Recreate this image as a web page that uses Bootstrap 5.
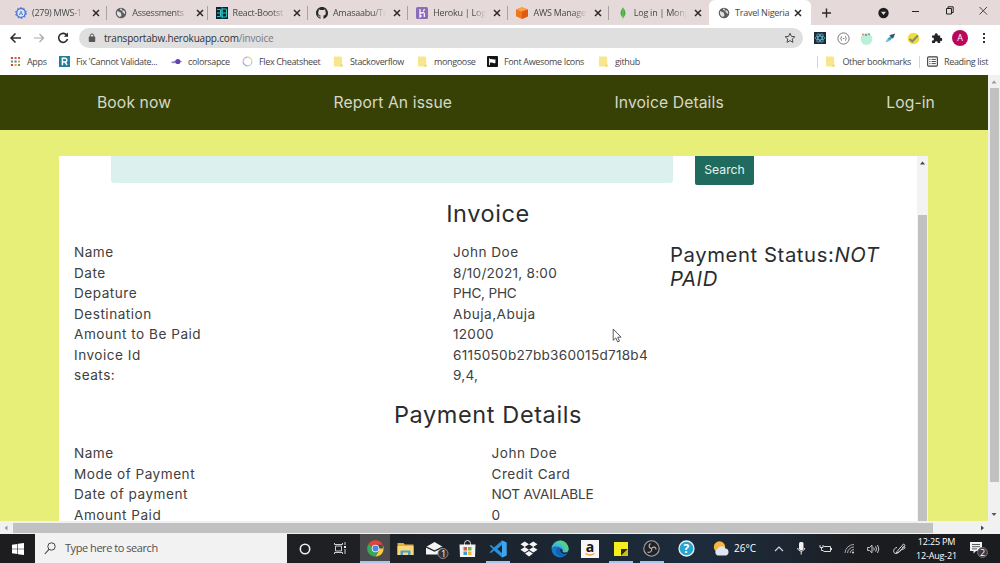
<!DOCTYPE html>
<html lang="en">
<head>
  <meta charset="UTF-8">
  <meta name="viewport" content="width=device-width, initial-scale=1.0">
  <title>Travel Nigeria</title>
  <link href="https://cdn.jsdelivr.net/npm/bootstrap@5.3.0/dist/css/bootstrap.min.css" rel="stylesheet">
  <style>
    body {
      width: 1000px;
      height: 563px;
      overflow: hidden;
      font-family: "Open Sans", "Liberation Sans", sans-serif;
      font-size: 9px;
      line-height: 1.3;
      color: #45474a;
    }
    svg { display: block; flex: none; }

    /* browser tabs */
    .tab-strip { height: 25px; background: #e5dad9; padding-left: 7px; }
    .tab-item {
      width: 100.3px;
      padding: 0 7px 0 8px;
      gap: 5px;
      position: relative;
    }
    .tab-item::after {
      content: "";
      width: 1px;
      height: 14px;
      background: #aaa1a1;
      position: absolute;
      right: 0;
      top: 6px;
    }
    .tab-item.current { background: #fff; border-radius: 6px 6px 0 0; padding-left: 9px; width: 102px; }
    .tab-item.current::after, .tab-item.before-current::after { display: none; }
    .tab-title {
      flex: 1;
      white-space: nowrap;
      letter-spacing: -.25px;
      -webkit-mask-image: linear-gradient(to right, #000 72%, transparent 96%);
      mask-image: linear-gradient(to right, #000 72%, transparent 96%);
    }
    .current .tab-title { -webkit-mask-image: none; mask-image: none; }

    /* address row */
    .tool-row { height: 26px; background: #fff; }
    .nav-icons { width: 79px; padding-left: 9px; gap: 12px; }
    .address { width: 724px; height: 20px; border-radius: 10px; background: #dfdfe0; padding: 0 7px 0 9px; font-size: 10px; letter-spacing: -.19px; color: #303134; }
    .address .path { color: #77797c; }
    .ext { display: grid; grid-template-columns: 23px 24px 23px 23px 24px 23px 24px 24px; padding-left: 5px; }
    .avatar { width: 16px; height: 16px; background: #b8085c; color: #fff; font-size: 9px; line-height: 16px; }

    /* bookmarks */
    .bookmark-row { height: 24px; background: #fff; padding-bottom: 3px; }
    .bookmarks { display: grid; grid-template-columns: 49px 112px 71px 91px 84px 70px 111px 60px; padding-left: 10px; }
    .bm { gap: 6px; white-space: nowrap; letter-spacing: -.35px; }
    .bm svg { width: 11px; height: 11px; }
    .bm-right { border-left: 1px solid #d5d5d5; padding-left: 7px; height: 12px; }

    /* page */
    .site { height: 446px; }
    .viewport { width: 988px; background: #e7ef79; font-family: "Inter", "Liberation Sans", sans-serif; }
    .site-nav { height: 55px; background: #374106; padding: 2px 53px 0 97px; font-size: 15.7px; color: #d6d8c6; letter-spacing: .1px; }
    .invoice-card { width: 869px; height: 365px; margin: 26px 0 0 59px; background: #fff; overflow: hidden; color: #404040; }
    .invoice-body { width: 858px; font-size: 13.6px; line-height: 20.5px; padding-left: 15px; }
    .search-field { width: 562px; height: 27px; margin-left: 37px; background: #dcf1ee; border-radius: 0 0 3px 3px; }
    .search-btn { width: 59px; height: 28.5px; margin-left: 22px; background: #1f6b5e; color: #e9f4f2; font-size: 12.2px; border-radius: 0 0 2px 2px; line-height: 27px; }
    .section-title { font-size: 23.5px; line-height: 29px; margin: 14px 0 0; color: #2b2c2e; margin-left: -15px; letter-spacing: .6px; }
    .section-rows { margin-top: 14.5px; letter-spacing: .5px; }
    .num { letter-spacing: .25px; }
    .caps { letter-spacing: -.2px; }
    .col-labels { width: 379px; }
    .col-values { width: 217px; }
    .wide .col-labels { width: 417.5px; }
    .status { width: 230px; font-size: 20.3px; line-height: 24px; color: #2b2c2e; letter-spacing: .58px; margin-top: 1px; }

    /* scrollbars */
    .scroll-col { width: 12px; background: #f1f1f1; }
    .card-scroll { width: 11px; background: #f3f3f3; }
    .thumb { background: #c1c1c1; }
    .scroll-col .thumb { height: 394px; width: 9px; }
    .card-scroll .thumb { width: 9px; height: 306px; }
    .h-scroll { height: 13px; background: #f1f1f1; }
    .h-scroll .thumb { width: 920px; height: 10px; }

    /* taskbar */
    .taskbar {
      height: 29px;
      background: linear-gradient(to right, #1d1d20 0, #1f2024 36%, #1b2530 52%, #1d2b3b 70%, #1d2733 78%, #1b1c1f 86%);
      display: grid;
      grid-template-columns: 35px 252px 35px 38px 30px 31px 31px 30px 31px 31px 31px 30px 31px 31px 38px 63px 22px 22px 26px 23px 24px 28px 47px 35px;
      color: #fff;
    }
    .taskbar > div { display: flex; align-items: center; justify-content: center; height: 29px; }
    .taskbar .search-box { background: #f2f2f2; color: #505050; justify-content: flex-start; padding-left: 9px; gap: 9px; font-size: 11px; letter-spacing: -.45px; }
    .taskbar .active-app { background-color: #4b4b4e; }
    .taskbar .running { background-image: linear-gradient(#a9c4ea, #a9c4ea); background-size: 24px 2px; background-position: center bottom; background-repeat: no-repeat; }
    .taskbar .active-app.running { background-size: 30px 2px; }
    .temp { font-size: 10px; gap: 4px; }
    .clock { font-size: 9px; line-height: 13.5px; letter-spacing: -.15px; white-space: nowrap; text-align: center; }

    .pointer { position: absolute; left: 612px; top: 328px; }
  </style>
</head>
<body>

  <!-- shared icons -->
  <svg width="0" height="0" class="position-absolute">
    <symbol id="close" viewBox="0 0 8 8"><path d="M1 1l6 6M7 1l-6 6" stroke="#2c2829" stroke-width="1.5"/></symbol>
    <symbol id="globe" viewBox="0 0 12 12"><circle cx="6" cy="6" r="5.3" fill="#5c5e61"/><path d="M2 4.2c1.6-.2 2.4 1 3.4 1.4 1.2.5.2 1.4 1 2.2.5.6-.8 2-1.5 2.2C2.700 9.300 1.400 7 2 4.200zM6.200 1.600c1 .5.400 1.500 1.300 1.800.8.300 1.400-.2 1.900.6.700 1.100 1 2.200.5 3.300-.6-.3-.5-1.300-1.400-1.500-1-.2-1.200-1-1-1.700C6.600 3.400 5 3.500 5 2.600c0-.5.600-.9 1.200-1z" fill="#e6e1e1"/></symbol>
    <symbol id="folder" viewBox="0 0 12 12"><path d="M1 .5h7.500l1.500 1v10H1z" fill="#f7e68c"/><path d="M8.500 9.500h2v2h-2z" fill="#e9cf62"/></symbol>
  </svg>

  <!-- tabs -->
  <div class="tab-strip d-flex">
    <div class="tab-item d-flex align-items-center">
      <svg width="12" height="12" viewBox="0 0 12 12"><circle cx="6" cy="6" r="4.300" fill="#dfe6f6" stroke="#3c6fd6" stroke-width="1.300"/><circle cx="6" cy="6" r="5.400" fill="none" stroke="#3c6fd6" stroke-width="1" stroke-dasharray="1.700 1.700"/><path d="M4.300 8L6 4l1.700 4M4.800 6.800h2.400" stroke="#4b7bd8" stroke-width=".8" fill="none"/></svg>
      <span class="tab-title">(279) MWS-1</span>
      <svg width="8" height="8"><use href="#close"/></svg>
    </div>
    <div class="tab-item d-flex align-items-center">
      <svg width="12" height="12"><use href="#globe"/></svg>
      <span class="tab-title">Assessments |</span>
      <svg width="8" height="8"><use href="#close"/></svg>
    </div>
    <div class="tab-item d-flex align-items-center">
      <svg width="12" height="12" viewBox="0 0 12 12"><path d="M0 0h12v12H0z" fill="#0b2529"/><path d="M1 2.500h3.500v7H1M1 6h3M6 2h4.500v8H6zM6 6h4.500M6 .5v11" stroke="#2ec4c8" stroke-width="1" fill="none"/></svg>
      <span class="tab-title">React-Bootst</span>
      <svg width="8" height="8"><use href="#close"/></svg>
    </div>
    <div class="tab-item d-flex align-items-center">
      <svg width="12" height="12" viewBox="0 0 16 16"><path fill="#24292e" d="M8 0C3.580 0 0 3.580 0 8c0 3.540 2.290 6.530 5.470 7.590.4.070.55-.17.55-.38 0-.19-.01-.82-.01-1.490-2.010.37-2.530-.49-2.690-.94-.09-.23-.48-.94-.82-1.130-.28-.15-.68-.52-.01-.53.63-.01 1.080.58 1.230.82.72 1.210 1.870.87 2.330.66.070-.52.28-.87.51-1.070-1.780-.2-3.640-.89-3.640-3.950 0-.87.31-1.590.82-2.150-.08-.2-.36-1.020.08-2.120 0 0 .67-.21 2.200.82.64-.18 1.320-.27 2-.27s1.360.09 2 .27c1.530-1.040 2.200-.82 2.200-.82.44 1.100.16 1.920.08 2.120.51.56.82 1.270.82 2.150 0 3.070-1.870 3.750-3.650 3.950.29.25.54.73.54 1.480 0 1.070-.01 1.930-.01 2.200 0 .21.15.46.55.38A8.010 8.010 0 0016 8c0-4.420-3.580-8-8-8z"/></svg>
      <span class="tab-title">Amasaabu/Tr</span>
      <svg width="8" height="8"><use href="#close"/></svg>
    </div>
    <div class="tab-item d-flex align-items-center">
      <svg width="12" height="12" viewBox="0 0 12 12"><rect width="12" height="12" rx="1.500" fill="#8c6cb8"/><path d="M4 2v4.500c3-1.300 4.300-.9 4.300 0V10M4 8v2l1.200-1zM8.300 2c0 1-.5 1.700-1.200 2.200" stroke="#fff" stroke-width="1.200" fill="none"/></svg>
      <span class="tab-title">Heroku | Logi</span>
      <svg width="8" height="8"><use href="#close"/></svg>
    </div>
    <div class="tab-item d-flex align-items-center">
      <svg width="12" height="12" viewBox="0 0 12 12"><path d="M6 .3l6 2.200v6.800L6 11.900 0 9.300V2.500z" fill="#f0751b"/><path d="M6 .3l6 2.200-6 2-6-2z" fill="#fba340"/><path d="M6 4.500l6-2v6.800l-6 2.600z" fill="#e25a12"/></svg>
      <span class="tab-title">AWS Manage</span>
      <svg width="8" height="8"><use href="#close"/></svg>
    </div>
    <div class="tab-item before-current d-flex align-items-center">
      <svg width="12" height="12" viewBox="0 0 12 12"><path d="M6 .5c3.500 4 3 7.500 0 10.500C3 8 2.500 4.500 6 .5z" fill="#3fae3f"/><path d="M6 .5V12" stroke="#8fd07a" stroke-width=".7"/></svg>
      <span class="tab-title">Log in | Mong</span>
      <svg width="8" height="8"><use href="#close"/></svg>
    </div>
    <div class="tab-item current d-flex align-items-center">
      <svg width="12" height="12"><use href="#globe"/></svg>
      <span class="tab-title">Travel Nigeria</span>
      <svg width="8" height="8" class="me-1"><use href="#close"/></svg>
    </div>
    <div class="flex-fill d-flex align-items-center justify-content-between ps-2 pe-2">
      <svg width="14" height="12" viewBox="0 0 14 12"><path d="M7.500 1.500v9M3 6h9" stroke="#2c2829" stroke-width="1.400"/></svg>
      <svg width="124" height="20" viewBox="0 0 124 20"><circle cx="15.500" cy="10" r="5.200" fill="#1f1f21"/><path d="M13 8.800h5L15.500 12z" fill="#e5dad9"/><path d="M44 8.500h7" stroke="#222"/><path d="M78.500 5.500h5v5.500h-5zM80 5.500V3.800h5.200v5.700h-1.700" stroke="#222" fill="none"/><path d="M111.500 4l7.500 7.500M119 4l-7.500 7.500" stroke="#333" stroke-width=".9"/></svg>
    </div>
  </div>

  <!-- address bar -->
  <div class="tool-row d-flex align-items-center">
    <div class="nav-icons d-flex align-items-center">
      <svg width="12" height="12" viewBox="0 0 12 12"><path d="M12 6H2M6.500 1.500L2 6l4.500 4.500" stroke="#2b2c2e" stroke-width="1.500" fill="none"/></svg>
      <svg width="12" height="12" viewBox="0 0 12 12"><path d="M1 6h9.500M6.500 2l4 4-4 4" stroke="#a7a8aa" stroke-width="1.200" fill="none"/></svg>
      <svg width="12" height="12" viewBox="0 0 12 12"><path d="M10 3.500A4.500 4.500 0 1 0 10.500 7" stroke="#2b2c2e" stroke-width="1.600" fill="none"/><path d="M11 .5v4.300H6.800z" fill="#2b2c2e"/></svg>
    </div>
    <div class="address d-flex align-items-center">
      <svg width="8" height="10" viewBox="0 0 8 10" class="me-2"><rect x=".8" y="3.500" width="6.400" height="5.500" rx=".7" fill="#55575a"/><path d="M2.300 4V2.600a1.700 1.700 0 0 1 3.400 0V4" stroke="#55575a" fill="none"/></svg>
      <span class="url">transportabw.herokuapp.com<span class="path">/invoice</span></span>
      <svg width="12" height="12" viewBox="0 0 12 12" class="ms-auto"><path d="M6 1.200l1.400 3.200 3.500.3-2.700 2.300.8 3.400L6 8.600 3 10.400l.8-3.400L1.100 4.700l3.500-.3z" stroke="#4d4f52" fill="none"/></svg>
    </div>
    <div class="ext flex-fill align-items-center">
      <svg width="12" height="12" viewBox="0 0 12 12" class="mx-auto"><path d="M0 0h12v12H0z" fill="#202a35"/><g fill="none" stroke="#5cb8d4" stroke-width=".8"><ellipse cx="6" cy="6" rx="4.800" ry="1.900"/><ellipse cx="6" cy="6" rx="4.800" ry="1.900" transform="rotate(60 6 6)"/><ellipse cx="6" cy="6" rx="4.800" ry="1.900" transform="rotate(120 6 6)"/></g></svg>
      <svg width="13" height="13" viewBox="0 0 13 13" class="mx-auto"><circle cx="6.500" cy="6.500" r="5.600" stroke="#66686b" fill="#fff" stroke-width=".9"/><path d="M4.900 4.300c-1 0-.2 1.800-1.200 2.200 1 .4.200 2.200 1.200 2.200M8.100 4.300c1 0 .2 1.800 1.200 2.200-1 .4-.2 2.200-1.200 2.200M5.800 6.500h1.500" stroke="#55575a" fill="none" stroke-width=".8"/></svg>
      <svg width="13" height="13" viewBox="0 0 13 13" class="mx-auto"><circle cx="6.500" cy="7" r="5.900" fill="#b9f0da"/><circle cx="3" cy="2.500" r="1.100" fill="#d88f7a"/><circle cx="6" cy="3" r=".9" fill="#c65a50"/><circle cx="9" cy="2.300" r="1" fill="#58a978"/></svg>
      <svg width="12" height="12" viewBox="0 0 12 12" class="mx-auto"><path d="M1.500 10.500L3 7l2.500 2z" fill="#6cc0dc"/><path d="M3.200 7L7 3.500l2 2L5.500 9z" fill="#4ba5c8"/><path d="M5.300 3.200L9 6.800 11.200 1.500z" fill="#35566a"/></svg>
      <svg width="13" height="13" viewBox="0 0 13 13" class="mx-auto"><circle cx="6.500" cy="6.500" r="5.800" fill="#f2dc3c"/><path d="M2.500 7l2.800 2.300L11 3.500" stroke="#7d8a76" stroke-width="2" fill="none"/></svg>
      <svg width="12" height="12" viewBox="0 0 12 12" class="mx-auto"><path d="M1 3.500h2.700a1.600 1.600 0 1 1 3 0H9.200V6a1.500 1.500 0 1 1 0 2.800V11H6.700a1.400 1.400 0 1 0-2.700 0H1V8.400a1.400 1.400 0 1 0 0-2.600z" fill="#222427"/></svg>
      <div class="avatar rounded-circle text-center mx-auto">A</div>
      <svg width="4" height="12" viewBox="0 0 4 12" class="mx-auto"><path d="M1 1h2v2H1zM1 5h2v2H1zM1 9h2v2H1z" fill="#333"/></svg>
    </div>
  </div>

  <!-- bookmarks -->
  <div class="bookmark-row d-flex align-items-center">
    <div class="bookmarks">
      <div class="bm d-flex align-items-center"><svg width="12" height="12" viewBox="0 0 12 12"><path d="M1 1h2.300v2.300H1zM1 8.700h2.300V11H1z" fill="#c9493c"/><path d="M4.900 1h2.300v2.300H4.900zM8.700 1H11v2.300H8.700z" fill="#d65b4c"/><path d="M1 4.900h2.300v2.300H1zM8.700 8.700H11V11H8.700z" fill="#5e9e50"/><path d="M4.900 4.900h2.300v2.300H4.900z" fill="#4a7fd8"/><path d="M8.700 4.900H11v2.300H8.700zM4.900 8.700h2.300V11H4.900z" fill="#dda93c"/></svg>Apps</div>
      <div class="bm d-flex align-items-center"><svg width="12" height="12" viewBox="0 0 12 12"><path d="M0 0h12v12H0z" fill="#20809c"/><path d="M3.700 10V2.500H6.500a2 2 0 0 1 0 4H4M6.500 6.500L8.800 10" stroke="#fff" stroke-width="1.600" fill="none"/></svg>Fix 'Cannot Validate...</div>
      <div class="bm d-flex align-items-center"><svg width="12" height="12" viewBox="0 0 12 12"><ellipse cx="6" cy="6.500" rx="6" ry="1.200" fill="#9d86d2" transform="rotate(-6 6 6)"/><circle cx="7.500" cy="6" r="2.800" fill="#6246ad"/></svg>colorsapce</div>
      <div class="bm d-flex align-items-center"><svg width="12" height="12" viewBox="0 0 12 12" fill="none" stroke-width="1.200"><path d="M6 1.200A4.800 4.800 0 0 1 10.800 6" stroke="#d9d77c"/><path d="M10.800 6A4.800 4.800 0 0 1 6 10.800" stroke="#94d6c4"/><path d="M6 10.800A4.800 4.800 0 0 1 1.200 6" stroke="#9d9be2"/><path d="M1.200 6A4.800 4.800 0 0 1 6 1.200" stroke="#dfa3c6"/></svg>Flex Cheatsheet</div>
      <div class="bm d-flex align-items-center"><svg width="12" height="12"><use href="#folder"/></svg>Stackoverflow</div>
      <div class="bm d-flex align-items-center"><svg width="12" height="12"><use href="#folder"/></svg>mongoose</div>
      <div class="bm d-flex align-items-center"><svg width="12" height="12" viewBox="0 0 12 12"><rect width="12" height="12" rx="1" fill="#141416"/><path d="M2.700 2.500V10" stroke="#fff"/><path d="M3.200 3.500c2.200-1 3.500 1 6 0v4c-2.500 1-3.800-1-6 0z" fill="#fff"/></svg>Font Awesome Icons</div>
      <div class="bm d-flex align-items-center"><svg width="12" height="12"><use href="#folder"/></svg>github</div>
    </div>
    <div class="d-flex ms-auto pe-2 me-1">
      <div class="bm bm-right d-flex align-items-center"><svg width="12" height="12"><use href="#folder"/></svg>Other bookmarks</div>
      <div class="bm bm-right ms-2 d-flex align-items-center"><svg width="12" height="12" viewBox="0 0 12 12"><rect x=".7" y="1" width="10.600" height="10" rx="1" stroke="#3c3e41" stroke-width="1.200" fill="none"/><path d="M2.500 3.700h1.300M5 3.700h4.700M2.500 6h1.300M5 6h4.700M2.500 8.300h1.300M5 8.300h4.700" stroke="#3c3e41"/></svg>Reading list</div>
    </div>
  </div>

  <!-- page -->
  <div class="site d-flex">
    <div class="viewport">
      <nav class="site-nav d-flex justify-content-between align-items-center">
        <span>Book now</span>
        <span>Report An issue</span>
        <span>Invoice Details</span>
        <span>Log-in</span>
      </nav>
      <div class="invoice-card d-flex">
        <div class="invoice-body">
          <div class="d-flex">
            <div class="search-field"></div>
            <div class="search-btn text-center">Search</div>
          </div>
          <h3 class="section-title text-center fw-normal">Invoice</h3>
          <div class="section-rows d-flex">
            <div class="col-labels">
              <div>Name</div>
              <div>Date</div>
              <div>Depature</div>
              <div>Destination</div>
              <div>Amount to Be Paid</div>
              <div>Invoice Id</div>
              <div>seats:</div>
            </div>
            <div class="col-values">
              <div>John Doe</div>
              <div class="num">8/10/2021, 8:00</div>
              <div class="caps">PHC, PHC</div>
              <div>Abuja,Abuja</div>
              <div class="num">12000</div>
              <div class="num">6115050b27bb360015d718b4</div>
              <div class="num">9,4,</div>
            </div>
            <div class="status">Payment Status:<i>NOT</i> <i>PAID</i></div>
          </div>
          <h3 class="section-title text-center fw-normal">Payment Details</h3>
          <div class="section-rows wide d-flex">
            <div class="col-labels">
              <div>Name</div>
              <div>Mode of Payment</div>
              <div>Date of payment</div>
              <div>Amount Paid</div>
            </div>
            <div>
              <div>John Doe</div>
              <div>Credit Card</div>
              <div class="caps">NOT AVAILABLE</div>
              <div>0</div>
            </div>
          </div>
        </div>
        <div class="card-scroll d-flex flex-column align-items-center">
          <svg width="11" height="59" viewBox="0 0 11 59"><path d="M3 8.500h5L5.500 5.500z" fill="#444"/></svg>
          <div class="thumb"></div>
        </div>
      </div>
    </div>
    <div class="scroll-col d-flex flex-column align-items-center">
      <svg width="12" height="13" viewBox="0 0 12 13"><path d="M3.500 8.500h5L6 5.500z" fill="#999"/></svg>
      <div class="thumb"></div>
      <svg width="12" height="13" viewBox="0 0 12 13" class="mt-auto"><path d="M3.500 5h5L6 8z" fill="#555"/></svg>
    </div>
  </div>
  <div class="h-scroll d-flex align-items-center">
    <svg width="13" height="12" viewBox="0 0 13 12"><path d="M7.500 3.500v5L4.500 6z" fill="#999"/></svg>
    <div class="thumb"></div>
    <svg width="55" height="12" viewBox="0 0 55 12"><path d="M48 3.500v5L51 6z" fill="#444"/></svg>
  </div>

  <!-- taskbar -->
  <div class="taskbar">
    <div><svg width="12" height="12" viewBox="0 0 12 12"><path d="M0 1.700l5.400-.8v4.800H0zM6 .8L12 0v5.700H6zM0 6.300h5.400v4.800L0 10.300zM6 6.300h6V12l-6-.8z" fill="#fff"/></svg></div>
    <div class="search-box">
      <svg width="12" height="13" viewBox="0 0 12 13"><circle cx="7.500" cy="4.500" r="3.700" stroke="#444" fill="none"/><path d="M5 7.300L.8 12" stroke="#444" stroke-width="1.100"/></svg>
      <span class="hint">Type here to search</span>
    </div>
    <div><svg width="12" height="12" viewBox="0 0 12 12"><circle cx="6" cy="6" r="4.700" stroke="#eee" stroke-width="1.600" fill="none"/></svg></div>
    <div><svg width="14" height="13" viewBox="0 0 14 13"><path d="M1.500 4h6v5h-6zM.5 1v1.500h8V1M.5 12v-1.500h8V12M11 0v3M11 7v5" stroke="#cfcfd2" fill="none"/><path d="M10 4h2v2h-2z" fill="#eee"/></svg></div>
    <div class="active-app running"><svg width="17" height="17" viewBox="0 0 18 18"><path d="M9 9L1.400 4.600A8.700 8.700 0 0 1 16.700 5H9z" fill="#e0453a"/><path d="M9 9h7.900L16.600 5A8.700 8.700 0 0 1 9 17.700L12.500 11z" fill="#f8cb3e"/><path d="M9 9L1.400 4.600A8.700 8.700 0 0 0 8.700 17.700L12.400 11z" fill="#3aa757"/><circle cx="9" cy="9" r="4" fill="#f2f2f2"/><circle cx="9" cy="9" r="3.100" fill="#4a86e8"/></svg></div>
    <div><svg width="17" height="14" viewBox="0 0 17 14"><path d="M.5 1h6l1.300 1.500h8.700V13H.5z" fill="#e3ad3c"/><path d="M.5 4h16v9H.5z" fill="#fbd873"/><path d="M3.500 8.500h10V13h-2.500v-2.500h-5V13H3.500z" fill="#4e9bd6"/></svg></div>
    <div><svg width="24" height="20" viewBox="0 0 24 20"><path d="M1 8L9.500 3 18 8v7.500H1z" fill="#f4f4f4"/><path d="M1 7.800l8.500 4.200L18 7.800" stroke="#202124" stroke-width="1.300" fill="none"/><circle cx="18" cy="14.500" r="5" fill="#333336" stroke="#8a8a8d"/><text x="16" y="18" font-size="9" fill="#fff">1</text></svg></div>
    <div><svg width="17" height="18" viewBox="0 0 17 18"><path d="M5.500 5V3.500a3 3 0 0 1 6 0V5" stroke="#ddd" fill="none"/><path d="M.5 4.500h16L16 17H1z" fill="#f3f3f3"/><path d="M4.500 7h3.500v3.500H4.500z" fill="#e2573a"/><path d="M9 7h3.500v3.500H9z" fill="#7fb53b"/><path d="M4.500 11.500h3.500V15H4.500z" fill="#3c9ad9"/><path d="M9 11.500h3.500V15H9z" fill="#f0b92f"/></svg></div>
    <div class="running"><svg width="18" height="18" viewBox="0 0 18 18"><path d="M13 .5l4.500 2v13l-4.500 2L5 10.500 2 13 .5 12.300 4 9 .5 5.700 2 5l3 2.500zM13 5L8.300 9l4.700 4z" fill="#2b8fdc" fill-rule="evenodd"/><path d="M13 .5l4.500 2v13l-4.500 2z" fill="#3ea6f0"/></svg></div>
    <div><svg width="18" height="16" viewBox="0 0 18 16"><path d="M4.700.5L9 3.200 4.700 6 .5 3.200zM13.300.5l4.200 2.700L13.300 6 9 3.200zM4.700 6L9 8.700l-4.300 2.800L.5 8.700zM13.300 6l4.200 2.700-4.200 2.800L9 8.700zM9 10l4 2.600L9 15.400l-4-2.800z" fill="#f5f5f5"/></svg></div>
    <div><svg width="18" height="18" viewBox="0 0 18 18"><circle cx="9" cy="9" r="8.500" fill="#1878c8"/><path d="M.8 7A8.500 8.500 0 0 1 17.500 9c0 3-3 4-6 3 1-1.500 0-4-2.500-4.800C6 6.200 2.500 5.500.8 8z" fill="#3fbcd0"/><path d="M9 .5A8.500 8.500 0 0 1 17.500 9c0 2-1.500 3.200-3.500 3.300C15 8 12 4 5 3z" fill="#56cf83"/><path d="M5.500 9c-1.500 4 1 7 5 7.300 2 .1 4-.6 5.500-2.300-3 1.500-7 .8-7-3 0-1.500.5-2 .5-2.700-1-.8-3.200-.8-4 .7z" fill="#155fae"/><path d="M9 9.500c1.500-1.500 3 .5 2.500 2.500 1.500 1 4.500.5 5.500-.5l-1.500 2.300c-3.500 1.200-6.500-.5-6.500-4.300z" fill="#1e2b38"/></svg></div>
    <div><svg width="18" height="18" viewBox="0 0 18 18"><path d="M0 0h18v18H0z" fill="#f7f7f7"/><text x="4.700" y="12" font-size="14" font-weight="bold" font-family="Open Sans" fill="#151515">a</text><path d="M4.500 13.500c2.500 2 6.500 2 9 0" stroke="#eaa648" stroke-width="1.300" fill="none"/></svg></div>
    <div class="running"><svg width="14" height="14" viewBox="0 0 14 14"><path d="M0 0h14v14H0z" fill="#f7ee1e"/><path d="M7 7h7l-7 7z" fill="#2a2a20"/><path d="M14 7v7H7z" fill="#c9c116"/></svg></div>
    <div class="running"><svg width="17" height="17" viewBox="0 0 17 17"><circle cx="8.500" cy="8.500" r="7.700" fill="#222125" stroke="#a9a9ab" stroke-width="1.100"/><path d="M8.500 8.500C5.500 8 5.500 5 7.500 3.500M8.500 8.500c2-2.500 4.500-1.500 4.500 1M8.500 8.500c1 2.700-1.500 4.500-4 3.500" stroke="#b8b8ba" stroke-width="1.200" fill="none"/></svg></div>
    <div><svg width="17" height="17" viewBox="0 0 17 17"><circle cx="8.500" cy="8.500" r="7.500" fill="#2ba3cf" stroke="#e8f4f9" stroke-width="1.300"/><text x="5.500" y="13" font-size="12" font-weight="bold" fill="#fff">?</text></svg></div>
    <div class="temp"><svg width="17" height="15" viewBox="0 0 17 15"><circle cx="6.500" cy="6" r="5.700" fill="#f5b83d"/><path d="M4.500 14.500a3.500 3.500 0 0 1 0-6.500 4.500 4.500 0 0 1 8-.5 3.600 3.600 0 0 1 .5 7z" fill="#dfe8f2"/></svg><span class="me-1">26°C</span></div>
    <div><svg width="10" height="6" viewBox="0 0 10 6"><path d="M1 5l4-4 4 4" stroke="#ddd" fill="none" stroke-width="1.100"/></svg></div>
    <div><svg width="10" height="13" viewBox="0 0 10 13"><rect x="3" y="0" width="4.500" height="8" rx="1.500" fill="#f2f2f2"/><path d="M1.700 6c0 4 7 4 7 0M5.200 9v3.500" stroke="#eee" fill="none"/></svg></div>
    <div><svg width="13" height="9" viewBox="0 0 13 9"><path d="M4.500 2.500h7v5h-7M1 1v2.500h3V1M2.500 3.500v3h2" stroke="#ddd" fill="none"/><path d="M12 4h1v2h-1z" fill="#ddd"/></svg></div>
    <div><svg width="11" height="11" viewBox="0 0 11 11" fill="none" stroke="#aaa"><path d="M1 10A9 9 0 0 1 10 1.500M3.500 10A6.500 6.500 0 0 1 10 4M6 10a4 4 0 0 1 4-3.500"/><circle cx="9" cy="9.500" r="1" fill="#ddd" stroke="none"/></svg></div>
    <div><svg width="13" height="10" viewBox="0 0 13 10" fill="none" stroke="#ddd" stroke-width=".9"><path d="M.6 3.500h2L5 1.200v7.600L2.600 6.500h-2zM6.700 3.500q1 1.500 0 3M8.600 2.300q1.800 2.700 0 5.400M10.500 1q2.700 4 0 8"/></svg></div>
    <div><svg width="13" height="12" viewBox="0 0 13 12" fill="none" stroke="#ddd"><path d="M4 8.500L10.500 1l1.500 1.300L6 9.300l-2.500.7zM4 4.500C0 5-.5 10.500 3 10.500c2 0 3-2.500 5-3.500s4-1 4-2.500-2-.5-3 .5"/></svg></div>
    <div class="clock"><div>12:25 PM<br>12-Aug-21</div></div>
    <div><svg width="20" height="20" viewBox="0 0 20 20"><path d="M2 3h12v9H8L5.500 14.500V12H2z" fill="#f2f2f2"/><path d="M4 5.500h8M4 7.700h8M4 9.900h5" stroke="#333" stroke-width=".8"/><circle cx="14.500" cy="13.500" r="4.900" fill="#3a3b3e" stroke="#77787b"/><text x="12" y="16.800" font-size="9" fill="#fff">2</text></svg></div>
  </div>

  <svg class="pointer" width="11" height="16" viewBox="0 0 11 16"><path d="M1.200 1v11.300l2.600-2.400 1.800 4 1.900-.8-1.800-3.900h3.400z" fill="#fff" stroke="#4a4a4a" stroke-width=".9"/></svg>

  <script src="https://cdn.jsdelivr.net/npm/bootstrap@5.3.0/dist/js/bootstrap.bundle.min.js"></script>
</body>
</html>
